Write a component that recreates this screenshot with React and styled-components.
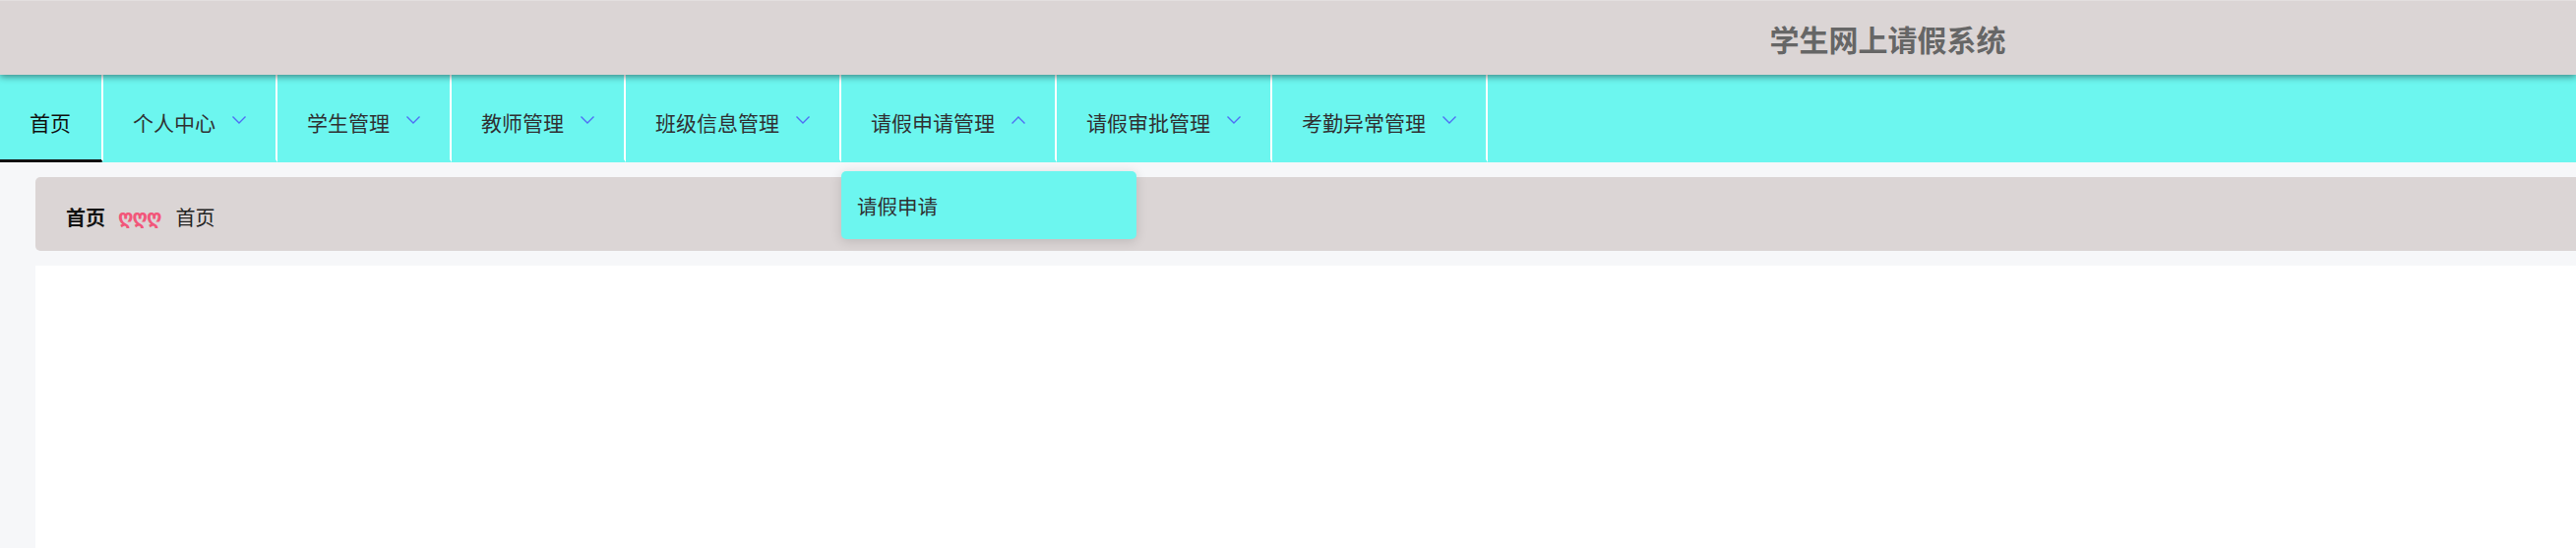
import React from 'react';
import styled, { createGlobalStyle } from 'styled-components';

const GlobalStyle = createGlobalStyle`
  body {
    margin: 0;
    background: #ffffff;
    font-family: "Noto Sans CJK SC", "Noto Sans", sans-serif;
    overflow: hidden;
  }
`;

const Page = styled.div`
  display: flex;
  flex-direction: column;
  min-height: 557px;
`;

const Header = styled.header`
  position: relative;
  z-index: 2;
  height: 75px;
  display: flex;
  align-items: center;
  padding-left: 68.7%;
  background: #dbd5d5;
  border-top: 1px solid #e3dfdf;
  box-shadow: 0 2px 7px rgba(0, 0, 0, 0.45);
`;

const Title = styled.h1`
  margin: 0;
  font-size: 30px;
  font-weight: 700;
  color: #666666;
`;

const Nav = styled.nav`
  position: relative;
  z-index: 1;
  display: flex;
  height: 89px;
  background: #6cf6ef;
`;

const NavItem = styled.div`
  position: relative;
  display: flex;
  align-items: center;
  gap: 16px;
  padding: 9px ${(props) => (props.$active ? '31px' : '29px')} 0 30px;
  border-right: 2px solid #ffffff;
  border-bottom: 3px solid ${(props) => (props.$active ? '#111111' : 'transparent')};
  border-bottom-right-radius: ${(props) => (props.$active ? '3px' : '0')};
  font-size: 21px;
  color: ${(props) => (props.$active ? '#111111' : '#303133')};
  white-space: nowrap;
  cursor: pointer;
`;

const Arrow = styled.svg`
  width: 16px;
  height: 10px;
  flex-shrink: 0;
  margin-top: -3px;
`;

const Dropdown = styled.div`
  position: absolute;
  left: 0;
  top: calc(100% + 12px);
  width: 300px;
  height: 69px;
  display: flex;
  align-items: center;
  padding-left: 16px;
  box-sizing: border-box;
  background: #6cf6ef;
  border-radius: 5px;
  box-shadow: 0 2px 12px rgba(0, 0, 0, 0.14);
  font-size: 20.5px;
  color: #303133;
`;

const Main = styled.main`
  flex: 1;
  display: flex;
  flex-direction: column;
  gap: 15px;
  padding: 15px 0 0 36px;
  background: #f6f7f9;
`;

const Breadcrumb = styled.div`
  height: 75px;
  display: flex;
  align-items: center;
  padding: 5px 0 0 31px;
  box-sizing: border-box;
  background: #dbd5d5;
  border-radius: 5px 0 0 5px;
  font-size: 20px;
  color: #222222;
`;

const Crumb = styled.span`
  font-weight: ${(props) => (props.$strong ? 700 : 400)};
  color: ${(props) => (props.$strong ? '#111111' : '#222222')};
`;

const Separator = styled.span`
  margin: 0 15px 0 13px;
  font-family: "DejaVu Sans", sans-serif;
  font-size: 19px;
  font-weight: 700;
  color: #f2577a;
  letter-spacing: -1px;
`;

const Content = styled.section`
  height: 300px;
  background: #ffffff;
`;

function Chevron({ up }) {
  return (
    <Arrow viewBox="0 0 16 10">
      <polyline
        points={up ? '1.5,8.5 8,2 14.5,8.5' : '1.5,1.5 8,8 14.5,1.5'}
        fill="none"
        stroke="#4f6ef5"
        strokeWidth="1.4"
      />
    </Arrow>
  );
}

const menus = [
  { label: '个人中心' },
  { label: '学生管理' },
  { label: '教师管理' },
  { label: '班级信息管理' },
  { label: '请假申请管理', open: true, children: ['请假申请'] },
  { label: '请假审批管理' },
  { label: '考勤异常管理' },
];

export default function App() {
  return (
    <>
      <GlobalStyle />
      <Page>
        <Header>
          <Title>学生网上请假系统</Title>
        </Header>
        <Nav>
          <NavItem $active>首页</NavItem>
          {menus.map((m) => (
            <NavItem key={m.label}>
              {m.label}
              <Chevron up={m.open} />
              {m.open && <Dropdown>{m.children[0]}</Dropdown>}
            </NavItem>
          ))}
        </Nav>
        <Main>
          <Breadcrumb>
            <Crumb $strong>首页</Crumb>
            <Separator>ღღღ</Separator>
            <Crumb>首页</Crumb>
          </Breadcrumb>
          <Content />
        </Main>
      </Page>
    </>
  );
}
